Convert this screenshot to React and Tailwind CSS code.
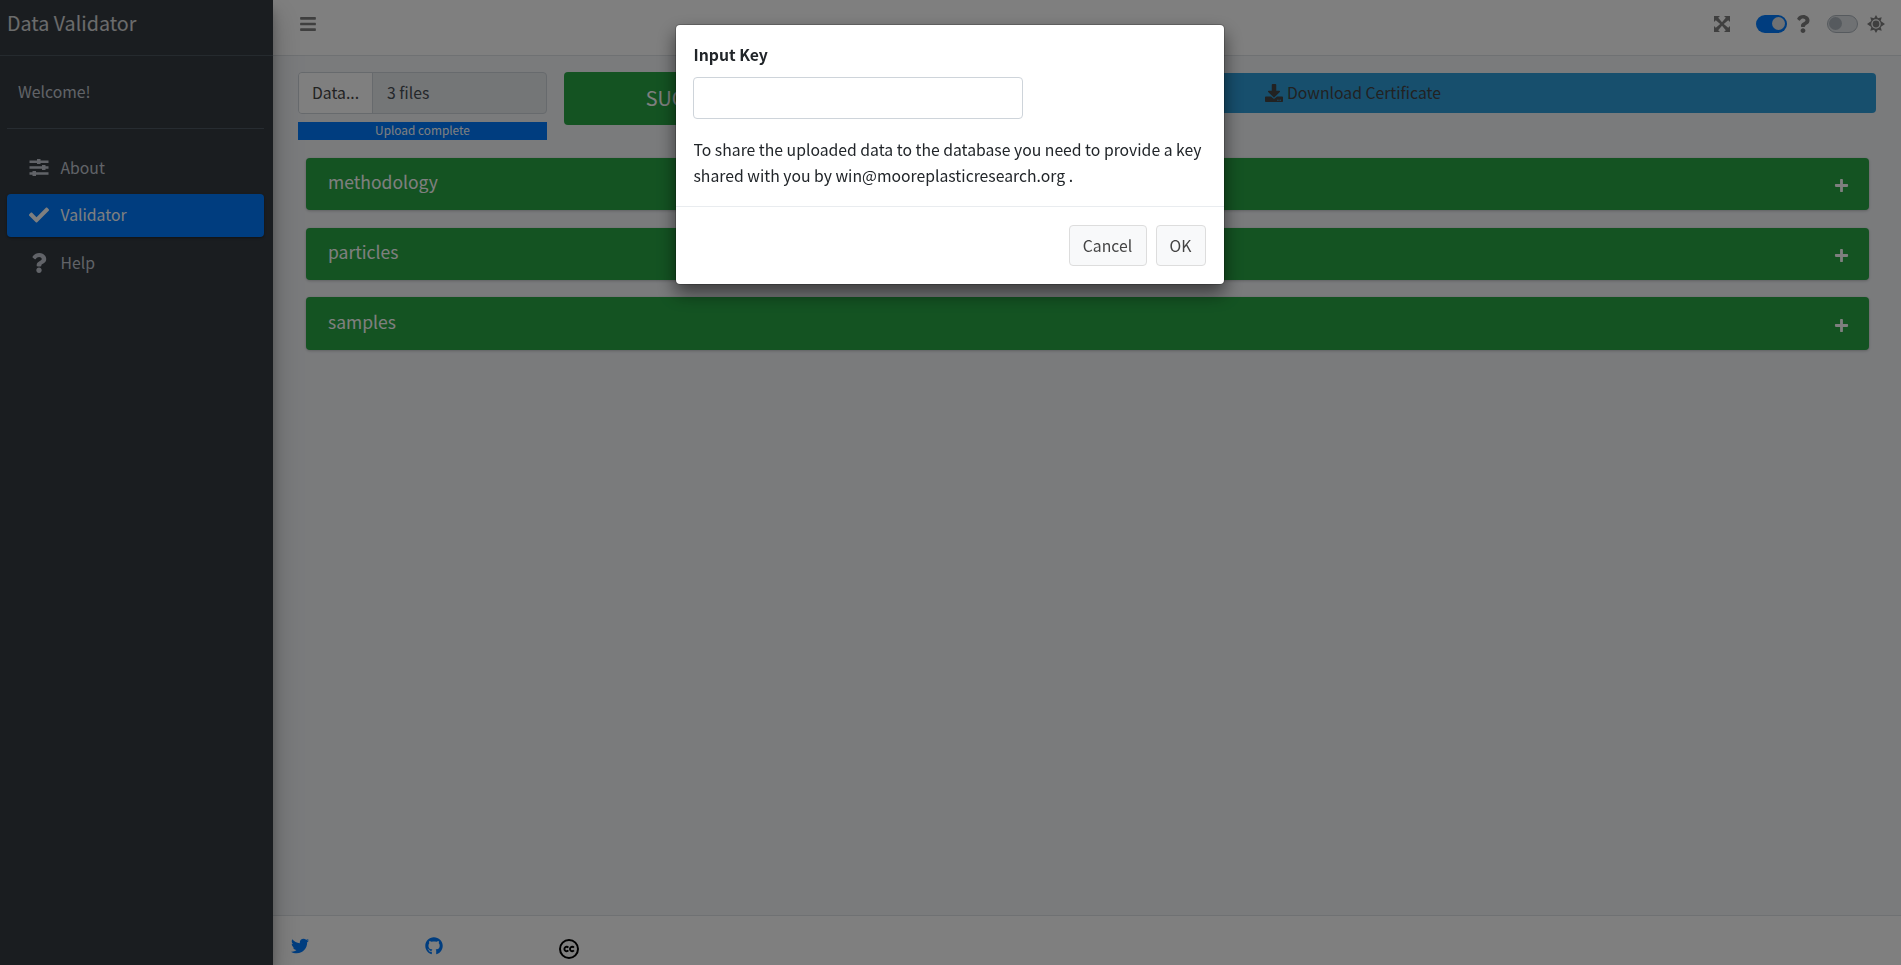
import { FaBars, FaCheck, FaQuestion, FaDownload, FaPlus, FaTwitter, FaGithub } from "react-icons/fa";

const T = ({ size = "text-[15.75px]", className = "", children }) => (
  <span className={`${size} whitespace-nowrap ${className}`}>{children}</span>
);

const Sliders = () => (
  <svg viewBox="0 0 20 17" className="h-[17px] w-5" fill="currentColor">
    <path d="M.5 1.500h7.500V0h3.500v1.500H19.500v2.500h-8V5H8V4H.5zM.5 7.300h12.500V6h3.500v1.300h3v2.500h-3V11H13V9.800H.5zM.5 13.200h3V12H7v1.200h12.500v2.500H7V17H3.500v-1.300h-3z" />
  </svg>
);

const Expand = () => (
  <svg viewBox="0 0 16 16" className="h-4 w-4" fill="currentColor">
    <path d="M0 0h6L4.200 1.800 8 6.200l3.800-4.400L10 0h6v6l-1.800-1.800L9.800 8l4.400 3.800L16 10v6h-6l1.800-1.800L8 9.800l-3.800 4.400L6 16H0v-6l1.800 1.800L6.200 8 1.800 4.200 0 6z" />
  </svg>
);

const Sun = () => (
  <svg viewBox="0 0 18 18" className="h-[18px] w-[18px]">
    <path
      fill="currentColor"
      fillRule="evenodd"
      d="M9 0l1.900 3.300 3.800-1-1 3.800L18 9l-4.300 2.900 1 3.800-3.800-1L9 18l-1.900-3.300-3.800 1 1-3.800L0 9l4.300-2.900-1-3.800 3.800 1zM9 4.300a4.700 4.700 0 1 0 0 9.400a4.700 4.700 0 1 0 0-9.400z"
    />
    <circle cx="9" cy="9" r="3.400" fill="currentColor" />
  </svg>
);

const CC = () => (
  <svg viewBox="0 0 20 20" className="mt-[2px] h-5 w-5" fill="none" stroke="#000">
    <circle cx="10" cy="10" r="9" strokeWidth="2" />
    <path strokeWidth="1.900" d="M9.300 8.600A2.200 2.200 0 1 0 9.300 11.400M14.900 8.600A2.200 2.200 0 1 0 14.900 11.400" />
  </svg>
);

const nav = [
  { label: "About", icon: <Sliders />, gap: "mb-1" },
  { label: "Validator", icon: <FaCheck size={20} />, active: true, gap: "mb-[5px]" },
  { label: "Help", icon: <FaQuestion size={20} />, gap: "" },
];

function Sidebar() {
  return (
    <aside className="z-10 flex w-[273px] shrink-0 flex-col bg-[#343a40] text-[#c2c7d0] shadow-[0_14px_28px_rgba(0,0,0,.25),0_10px_10px_rgba(0,0,0,.22)]">
      <div className="flex h-14 items-center border-b border-[#4b545c] pb-[9px] pl-[7px] text-white/80">
        <T size="text-[19.700px]">Data Validator</T>
      </div>
      <div className="mx-[7px] mr-[9px] flex h-[73px] items-center border-b border-[#4f5962] pl-[11px]">
        <T>Welcome!</T>
      </div>
      <nav className="mt-[18px] flex flex-col pl-[7px] pr-[9px]">
        {nav.map((n) => (
          <div
            key={n.label}
            className={`flex h-[43px] items-center rounded pb-px ${n.gap} ${n.active ? "bg-[#007bff] text-white shadow-[0_1px_3px_rgba(0,0,0,.12),0_1px_2px_rgba(0,0,0,.24)]" : ""}`}
          >
            <span className="ml-[22px] mr-[11.500px] flex w-5 justify-center pb-px">{n.icon}</span>
            <T>{n.label}</T>
          </div>
        ))}
      </nav>
    </aside>
  );
}

function Header() {
  return (
    <header className="flex h-14 items-center border-b border-[#dee2e6] bg-white pb-2 pl-[26px] pr-4 text-[#7f7f7f]">
      <FaBars size={18} />
      <div className="ml-auto flex items-center">
        <Expand />
        <div className="ml-[26px] flex h-[18px] w-[31px] items-center justify-end rounded-full bg-[#007bff] px-[2px]">
          <span className="h-[13px] w-[13px] rounded-full bg-[#dee2e6]" />
        </div>
        <FaQuestion size={18} className="ml-[7px]" />
        <div className="ml-[15px] flex h-[18px] w-[31px] items-center rounded-full border border-[#adb5bd] bg-[#dee2e6] px-[1px]">
          <span className="h-[13px] w-[13px] rounded-full bg-[#adb5bd]" />
        </div>
        <span className="ml-[9px]"><Sun /></span>
      </div>
    </header>
  );
}

function Main() {
  return (
    <main className="flex-1 bg-[#f4f6f9] pl-[25px] pr-[25px] pt-4">
      <div className="flex items-start gap-[17px]">
        <div className="w-[249px]">
          <div className="flex h-[42px] overflow-hidden rounded border border-[#ced4da] bg-[#e9ecef] text-[#495057]">
            <div className="flex w-[74px] items-center border-r border-[#ced4da] bg-white pl-[13px] text-[#444]"><T>Data...</T></div>
            <div className="flex items-center pl-[14px]"><T>3 files</T></div>
          </div>
          <div className="mt-2 flex h-[18px] items-center justify-center bg-[#007bff] pb-[2px] text-white"><T size="text-[11.850px]">Upload complete</T></div>
        </div>
        <div className="flex h-[53px] w-[249px] items-center justify-center rounded bg-[#28a745] pb-px text-white"><T size="text-[19.800px]">SUCCESS</T></div>
        <div className="mt-px flex h-10 flex-1 items-center justify-center gap-1 rounded bg-[#2e9edb] text-[#444]">
          <FaDownload size={18} />
          <T>Download Certificate</T>
        </div>
      </div>
      <div className="mt-[18px] flex flex-col pl-2 pr-[7px]">
        {[
          ["methodology", "h-[52px] mb-[18px]"],
          ["particles", "h-[52px] mb-[17px]"],
          ["samples", "h-[53px]"],
        ].map(([s, box]) => (
          <section key={s} className={`${box} flex items-center justify-between rounded bg-[#28a745] pl-[22px] pr-[20px] text-white shadow-[0_1px_3px_rgba(0,0,0,.2),0_0_1px_rgba(0,0,0,.125)]`}>
            <T size="text-[17.500px]" className="pb-[3px]">{s}</T>
            <FaPlus size={15} className="mt-[3px]" />
          </section>
        ))}
      </div>
    </main>
  );
}

function Footer() {
  return (
    <footer className="flex h-[50px] items-start border-t border-[#dee2e6] bg-white pl-[18px] pt-[21px] text-[#007bff]">
      <div className="w-[134px]"><FaTwitter size={18} /></div>
      <div className="w-[134px]"><FaGithub size={18} /></div>
      <CC />
    </footer>
  );
}

function Modal() {
  return (
    <div className="fixed inset-0 z-20 flex items-start justify-center bg-black/50 pr-[2px] pt-6">
      <div className="h-[261px] w-[550px] rounded-[5px] border border-black/20 bg-white bg-clip-padding text-[#212529] shadow-[0_9px_18px_rgba(0,0,0,.5)]">
        <div className="flex h-[182px] flex-col border-b border-[#e9ecef] px-[17px] pt-4">
          <label className="h-[26px] pl-px font-bold leading-[26px]"><T>Input Key</T></label>
          <input className="mt-[10px] h-[42px] w-[330px] rounded border border-[#ced4da]" />
          <p className="mt-[18px] whitespace-nowrap pl-px text-[15.750px] leading-[26px]">
            To share the uploaded data to the database you need to provide a key<br />
            shared with you by win@mooreplasticresearch.org .
          </p>
        </div>
        <div className="flex justify-end gap-[9px] pr-[18px] pt-[18px] text-[#444]">
          <button className="h-[41px] w-[78px] rounded border border-[#ddd] bg-[#f8f9fa]"><T>Cancel</T></button>
          <button className="h-[41px] w-[50px] rounded border border-[#ddd] bg-[#f8f9fa]"><T>OK</T></button>
        </div>
      </div>
    </div>
  );
}

export default function App() {
  return (
    <div className="flex h-[965px] w-[1901px] overflow-hidden font-['Noto_Sans_CJK_SC',sans-serif]">
      <Sidebar />
      <div className="flex min-w-0 flex-1 flex-col">
        <Header />
        <Main />
        <Footer />
      </div>
      <Modal />
    </div>
  );
}
